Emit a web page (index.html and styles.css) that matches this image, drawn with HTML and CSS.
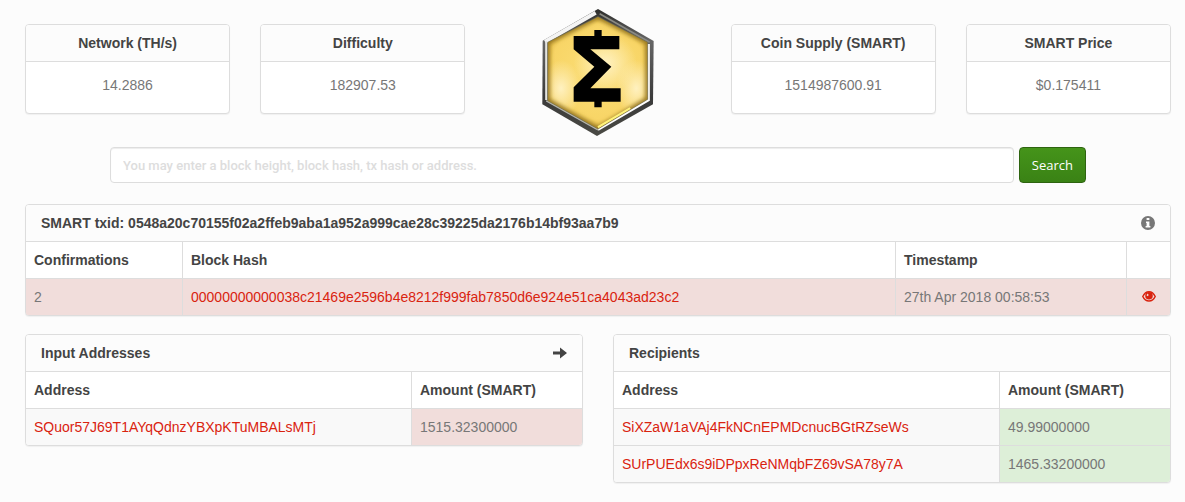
FILE: index.html
```html
<!DOCTYPE html>
<html lang="en">
<head>
  <meta charset="UTF-8" />
  <meta name="viewport" content="width=device-width, initial-scale=1.0"/>
  <title>SMART Explorer</title>
  <link rel="stylesheet" href="styles.css">
</head>
<body>
  <div class="container">
    <header class="stats">
      <div class="panel stat">
        <div class="panel-heading">Network (TH/s)</div>
        <div class="stat-body">14.2886</div>
      </div>
      <div class="panel stat">
        <div class="panel-heading">Difficulty</div>
        <div class="stat-body">182907.53</div>
      </div>
      <svg class="logo" viewBox="35 27 336 381" role="img" aria-label="SmartCash">
        <defs>
          <linearGradient id="metal" x1="0" y1="0" x2="0" y2="1">
            <stop offset="0" stop-color="#2c2c2a"/>
            <stop offset="0.25" stop-color="#666"/>
            <stop offset="0.7" stop-color="#3a3a3a"/>
            <stop offset="1" stop-color="#4a4a44"/>
          </linearGradient>
          <radialGradient id="gold" cx="203" cy="215" r="190" gradientUnits="userSpaceOnUse">
            <stop offset="0" stop-color="#fbde78"/>
            <stop offset="0.75" stop-color="#f8d566"/>
            <stop offset="1" stop-color="#e3b740"/>
          </radialGradient>
          <radialGradient id="glow">
            <stop offset="0" stop-color="#fff1c0"/>
            <stop offset="1" stop-color="#fff1c0" stop-opacity="0"/>
          </radialGradient>
          <clipPath id="face">
            <path d="M203 50 352 127V298L203 387 52 302V127Z"/>
          </clipPath>
          <filter id="soft">
            <feGaussianBlur stdDeviation="7"/>
          </filter>
        </defs>
        <path fill="url(#metal)" d="M203 27 370 123 368 313 200 408 36 313 37 122Z"/>
        <path fill="none" stroke="#f4f4f4" stroke-width="12" d="M44 125 196 38"/>
        <path fill="none" stroke="#8a8a84" stroke-width="5" d="M208 41 358 127"/>
        <path fill="none" stroke="#e4e4e0" stroke-width="7" d="M48 124V300"/>
        <path fill="none" stroke="#fff" stroke-width="7" d="M355 132V300L203 389"/>
        <path fill="none" stroke="#b4b4ac" stroke-width="5" d="M48 302 203 389"/>
        <g clip-path="url(#face)">
          <path fill="url(#gold)" d="M203 50 352 127V298L203 387 52 302V127Z"/>
          <ellipse cx="92" cy="265" rx="60" ry="85" fill="url(#glow)"/>
          <ellipse cx="318" cy="265" rx="60" ry="85" fill="url(#glow)"/>
          <ellipse cx="225" cy="190" rx="95" ry="90" fill="url(#glow)"/>
          <path fill="none" stroke="#8a6a14" stroke-width="13" filter="url(#soft)" d="M203 50 352 127V298L203 387 52 302V127Z"/>
          <path fill="none" stroke="#fff37a" stroke-width="7" d="M203 382 300 325"/>
        </g>
        <path fill="none" stroke="#77704a" stroke-width="2" d="M203 50 352 127V298L203 387 52 302V127Z"/>
        <path d="M192 90h22v18h53v40h-87l63 52-63 65h91v40h-57v17h-22v-17h-62v-43l62-62-62-52v-40h62Z"/>
      </svg>
      <div class="panel stat">
        <div class="panel-heading">Coin Supply (SMART)</div>
        <div class="stat-body">1514987600.91</div>
      </div>
      <div class="panel stat">
        <div class="panel-heading">SMART Price</div>
        <div class="stat-body">$0.175411</div>
      </div>
    </header>

    <form class="search">
      <input type="text" name="search" aria-label="Search" placeholder="You may enter a block height, block hash, tx hash or address." />
      <button type="submit">Search</button>
    </form>

    <section class="panel">
      <div class="panel-heading">
        SMART txid: 0548a20c70155f02a2ffeb9aba1a952a999cae28c39225da2176b14bf93aa7b9
        <a class="info" href="#" aria-label="Transaction info">
          <svg class="icon" viewBox="0 0 14 14"><path fill="currentColor" fill-rule="evenodd" d="M7 0a7 7 0 1 0 0 14A7 7 0 0 0 7 0ZM5.600 2H8.400V4H5.600ZM5 5.500H8.400V10H9.400V11.400H4.600V10H5.600V7H5Z"/></svg>
        </a>
      </div>
      <table class="tx">
        <thead>
          <tr>
            <th class="col-conf">Confirmations</th>
            <th>Block Hash</th>
            <th class="col-time">Timestamp</th>
            <th class="col-view"></th>
          </tr>
        </thead>
        <tbody>
          <tr class="danger">
            <td>2</td>
            <td><a href="#">00000000000038c21469e2596b4e8212f999fab7850d6e924e51ca4043ad23c2</a></td>
            <td>27th Apr 2018 00:58:53</td>
            <td class="view">
              <a href="#" aria-label="View block">
                <svg class="icon" viewBox="0 0 14 14">
                  <path fill="none" stroke="currentColor" stroke-width="1.500" d="M.8 6.500C2.200 3.500 4.300 1.700 7 1.700s4.800 1.800 6.200 4.800C11.800 9.500 9.700 11 7 11S2.200 9.500.8 6.500Z"/>
                  <path fill="currentColor" fill-rule="evenodd" d="M7 2a3.800 3.800 0 1 0 0 7.600A3.800 3.800 0 0 0 7 2ZM5.500 3.600 6.800 4.900 5.600 6.300 4.500 5.200Z"/>
                </svg>
              </a>
            </td>
          </tr>
        </tbody>
      </table>
    </section>

    <div class="addresses">
      <section class="panel">
        <div class="panel-heading">
          Input Addresses
          <svg class="icon" viewBox="0 0 14 14"><path fill="currentColor" d="M0 5.500H7V1.500L14 7 7 12.500V8.500H0Z"/></svg>
        </div>
        <table>
          <thead>
            <tr><th>Address</th><th class="col-amount">Amount (SMART)</th></tr>
          </thead>
          <tbody>
            <tr>
              <td><a href="#">SQuor57J69T1AYqQdnzYBXpKTuMBALsMTj</a></td>
              <td class="danger">1515.32300000</td>
            </tr>
          </tbody>
        </table>
      </section>

      <section class="panel">
        <div class="panel-heading">Recipients</div>
        <table>
          <thead>
            <tr><th>Address</th><th class="col-amount">Amount (SMART)</th></tr>
          </thead>
          <tbody>
            <tr>
              <td><a href="#">SiXZaW1aVAj4FkNCnEPMDcnucBGtRZseWs</a></td>
              <td class="success">49.99000000</td>
            </tr>
            <tr>
              <td><a href="#">SUrPUEdx6s9iDPpxReNMqbFZ69vSA78y7A</a></td>
              <td class="success">1465.33200000</td>
            </tr>
          </tbody>
        </table>
      </section>
    </div>
  </div>
</body>
</html>
```

FILE: styles.css
```css
* {
  box-sizing: border-box;
}
body {
  margin: 0;
  background: #fcfcfc;
  color: #777;
  font-family: "Liberation Sans", Arial, sans-serif;
  font-size: 14px;
  line-height: 20px;
}
a {
  color: #d9230f;
  text-decoration: none;
}
.container {
  padding: 9px 14px 18px 25px;
}
.icon {
  display: block;
  width: 14px;
  height: 14px;
}

/* panels */
.panel {
  background: #fff;
  border: 1px solid #ddd;
  border-radius: 4px;
  box-shadow: 0 1px 1px rgba(0, 0, 0, 0.05);
  overflow: hidden;
}
.panel-heading {
  display: flex;
  align-items: center;
  justify-content: space-between;
  padding: 8px 15px;
  background: #fcfcfc;
  color: #444;
  font-weight: bold;
}
.info {
  color: #777;
}

/* top row */
.stats {
  display: grid;
  grid-template-columns: repeat(5, 1fr);
  gap: 30px;
  align-items: start;
  text-align: center;
}
.stat {
  margin-top: 15px;
}
.stat .panel-heading {
  justify-content: center;
  border-bottom: 1px solid #ddd;
}
.stat-body {
  padding: 13px 15px 18px;
}
.logo {
  width: 112px;
  height: 127px;
  justify-self: center;
}

/* search */
.search {
  display: flex;
  align-items: center;
  gap: 5px;
  margin: 11px 85px 21px;
}
.search input {
  flex: 1;
  height: 36px;
  padding: 8px 12px;
  border: 1px solid #ddd;
  border-radius: 4px;
  background: #fff;
  box-shadow: inset 0 1px 1px rgba(0, 0, 0, 0.075);
  color: #777;
  font-family: Roboto, sans-serif;
  font-size: 13px;
  font-weight: 500;
}
.search input::placeholder {
  color: #ddd;
  opacity: 1;
}
.search button {
  height: 36px;
  padding: 0 12px;
  border: 1px solid #2e6410;
  border-radius: 4px;
  background: linear-gradient(#45941a, #3a8215);
  color: #fff;
  font-family: "Open Sans", sans-serif;
  font-size: 13px;
  cursor: pointer;
}

/* tables */
table {
  width: 100%;
  table-layout: fixed;
  border-collapse: separate;
  border-spacing: 0;
}
th, td {
  padding: 8px;
  border-top: 1px solid #ddd;
  text-align: left;
}
th + th, td + td {
  border-left: 1px solid #ddd;
}
th {
  color: #444;
}
td {
  background: #f9f9f9;
}
.danger, .danger td {
  background: #f1dddb;
}
.success {
  background: #ddefd8;
}
.col-conf {
  width: 156px;
}
.col-time {
  width: 231px;
}
.col-view {
  width: 44px;
}
.col-amount {
  width: 171px;
}
.view a {
  display: flex;
  justify-content: center;
}

.addresses {
  display: grid;
  grid-template-columns: 1fr 1fr;
  gap: 30px;
  align-items: start;
  margin-top: 18px;
}
```
